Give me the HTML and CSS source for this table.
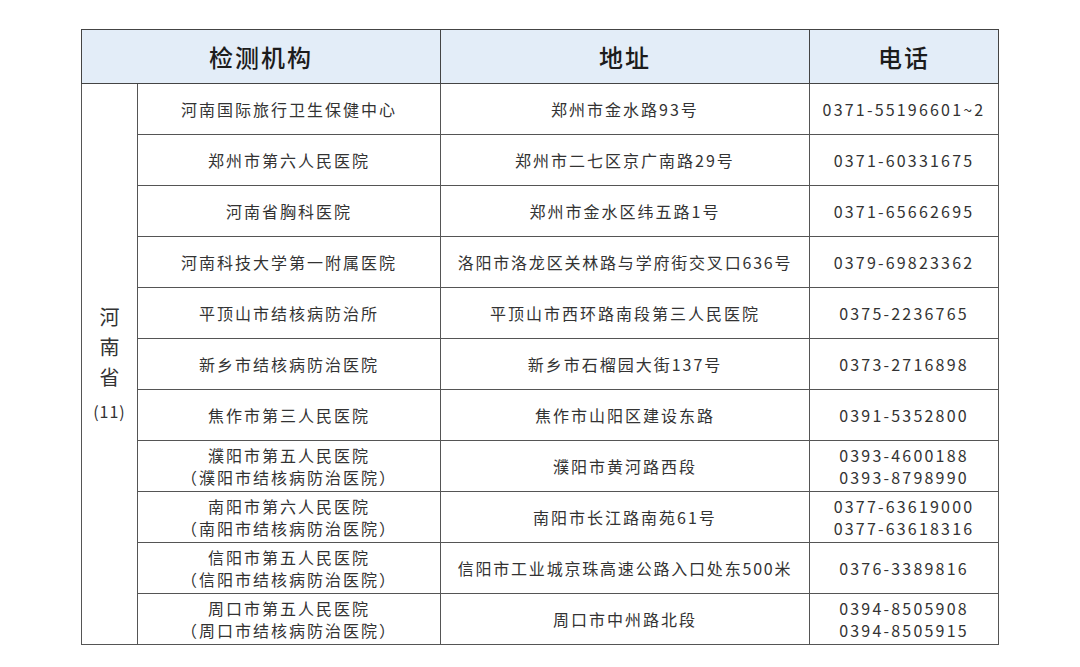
FILE: index.html
```html
<!DOCTYPE html>
<html lang="zh-CN">
<head>
<meta charset="utf-8">
<title>河南省检测机构</title>
<link rel="stylesheet" href="styles.css">
</head>
<body>
<table class="t">
  <colgroup>
    <col class="c-prov"><col class="c-org"><col class="c-addr"><col class="c-tel">
  </colgroup>
  <thead>
    <tr><th colspan="2">检测机构</th><th>地址</th><th>电话</th></tr>
  </thead>
  <tbody>
    <tr>
      <td rowspan="11" class="prov"><span class="pv">河<br>南<br>省</span><span class="cnt">(11)</span></td>
      <td>河南国际旅行卫生保健中心</td><td>郑州市金水路93号</td><td class="tel">0371-55196601~2</td>
    </tr>
    <tr><td>郑州市第六人民医院</td><td>郑州市二七区京广南路29号</td><td class="tel">0371-60331675</td></tr>
    <tr><td>河南省胸科医院</td><td>郑州市金水区纬五路1号</td><td class="tel">0371-65662695</td></tr>
    <tr><td>河南科技大学第一附属医院</td><td class="long">洛阳市洛龙区关林路与学府街交叉口636号</td><td class="tel">0379-69823362</td></tr>
    <tr><td>平顶山市结核病防治所</td><td>平顶山市西环路南段第三人民医院</td><td class="tel">0375-2236765</td></tr>
    <tr><td>新乡市结核病防治医院</td><td>新乡市石榴园大街137号</td><td class="tel">0373-2716898</td></tr>
    <tr><td>焦作市第三人民医院</td><td>焦作市山阳区建设东路</td><td class="tel">0391-5352800</td></tr>
    <tr><td>濮阳市第五人民医院<br>（濮阳市结核病防治医院）</td><td>濮阳市黄河路西段</td><td class="tel">0393-4600188<br>0393-8798990</td></tr>
    <tr><td>南阳市第六人民医院<br>（南阳市结核病防治医院）</td><td>南阳市长江路南苑61号</td><td class="tel">0377-63619000<br>0377-63618316</td></tr>
    <tr><td>信阳市第五人民医院<br>（信阳市结核病防治医院）</td><td class="long">信阳市工业城京珠高速公路入口处东500米</td><td class="tel">0376-3389816</td></tr>
    <tr><td>周口市第五人民医院<br>（周口市结核病防治医院）</td><td>周口市中州路北段</td><td class="tel">0394-8505908<br>0394-8505915</td></tr>
  </tbody>
</table>
</body>
</html>
```

FILE: styles.css
```css
html, body {
  margin: 0;
  padding: 0;
  background: #ffffff;
}

body {
  font-family: "Noto Sans CJK SC", "Noto Sans", sans-serif;
  color: #333333;
  padding: 29px 0 0 81px;
}

.t {
  border-collapse: collapse;
  table-layout: fixed;
  width: 917px;
  border: 1px solid #333333;
}

.c-prov { width: 56px; }
.c-org { width: 303px; }
.c-addr { width: 369px; }
.c-tel { width: 189px; }

.t th {
  height: 53px;
  padding: 0;
  background: #e3edf8;
  color: #1c1c1c;
  font-size: 24px;
  font-weight: 500;
  letter-spacing: 2px;
  text-align: center;
  vertical-align: middle;
  border: 1px solid #444444;
}

.t td {
  height: 50px;
  padding: 0;
  font-size: 16px;
  line-height: 22px;
  letter-spacing: 2px;
  text-align: center;
  vertical-align: middle;
  border: 1px solid #555555;
  white-space: nowrap;
}

.t td.long {
  letter-spacing: 1.8px;
}

.t td.tel {
  letter-spacing: 2.2px;
  font-size: 16px;
}

.t td.prov {
  font-size: 20px;
  line-height: 30px;
  letter-spacing: 0;
}

.pv {
  display: block;
}

.cnt {
  display: block;
  margin-top: 4px;
  font-size: 16px;
  letter-spacing: 1px;
}
```
